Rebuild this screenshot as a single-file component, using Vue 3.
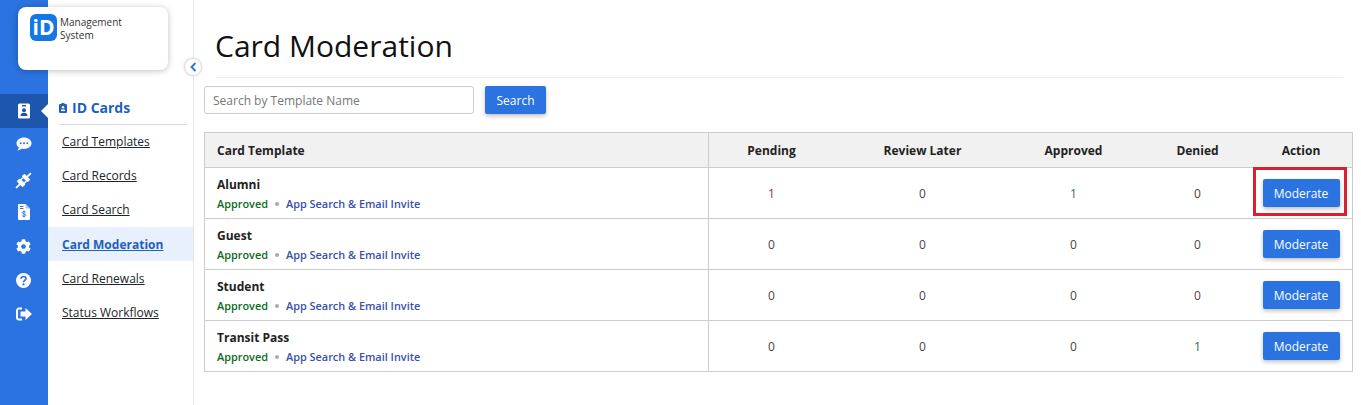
<script setup>
const navIcons = ['chat', 'plug', 'file', 'gear', 'help', 'out']
const links = ['Card Templates', 'Card Records', 'Card Search', 'Card Moderation', 'Card Renewals', 'Status Workflows']
const rows = [
  { name: 'Alumni', vals: ['1', '0', '1', '0'], flagged: true },
  { name: 'Guest', vals: ['0', '0', '0', '0'] },
  { name: 'Student', vals: ['0', '0', '0', '0'] },
  { name: 'Transit Pass', vals: ['0', '0', '0', '1'] },
]
const tones = ['pending', 'later', 'approved', 'denied']
</script>

<template>
  <div class="page">
    <aside class="rail">
      <div class="rail-item active">
        <svg width="14" height="16" viewBox="0 0 14 16"><rect x="1" y="0.5" width="12" height="15" rx="1.5" fill="#fff"/><rect x="5" y="2" width="4" height="1.4" fill="#1c56ad"/><circle cx="7" cy="7.2" r="2" fill="#1c56ad"/><path d="M3.5 13c0-2.3 1.5-3.2 3.5-3.2s3.500.9 3.500 3.200z" fill="#1c56ad"/></svg>
        <span class="notch"></span>
      </div>
      <div v-for="i in navIcons" :key="i" class="rail-item">
        <svg v-if="i === 'chat'" width="16" height="14" viewBox="0 0 16 14"><path d="M8 .5c4.200 0 7.500 2.500 7.500 5.700S12.200 11.900 8 11.900c-.8 0-1.500-.1-2.200-.3C4.700 12.600 3 13.500 1.200 13.500c1-.9 1.600-2 1.800-3C1.400 9.500.5 7.900.5 6.200.5 3 3.800.5 8 .5z" fill="#fff"/><g fill="#2a73e0"><circle cx="4.700" cy="6.200" r="1"/><circle cx="8" cy="6.200" r="1"/><circle cx="11.300" cy="6.200" r="1"/></g></svg>
        <svg v-else-if="i === 'plug'" class="plug" width="17" height="17" viewBox="0 0 17 17"><g transform="rotate(-45 8.500 8.500)" fill="#fff"><rect x="-2" y="7.600" width="5.500" height="1.800"/><rect x="3" y="4.300" width="4.500" height="8.400" rx="1.200"/><rect x="7.500" y="5.400" width="2.600" height="1.500"/><rect x="7.500" y="10.100" width="2.600" height="1.500"/><rect x="10" y="4.300" width="4" height="8.400" rx="1.200"/><rect x="13.500" y="7.600" width="5.500" height="1.800"/></g></svg>
        <svg v-else-if="i === 'file'" width="12" height="16" viewBox="0 0 12 16"><path d="M0 1a1 1 0 0 1 1-1h6.500L12 4.500V15a1 1 0 0 1-1 1H1a1 1 0 0 1-1-1z" fill="#fff"/><path d="M7.500 0v4.500H12z" fill="#a9c7f3"/><path d="M2 2.500h3.500M2 4.500h3.500" stroke="#2a73e0" stroke-width="1"/><path d="M7.700 8.200c-.3-.5-.9-.7-1.700-.7-1 0-1.700.5-1.700 1.200 0 1.700 3.500.8 3.500 2.500 0 .7-.7 1.200-1.800 1.200-.8 0-1.500-.3-1.800-.8M6 6.500v7" fill="none" stroke="#2a73e0" stroke-width=".9"/></svg>
        <svg v-else-if="i === 'gear'" width="15" height="15" viewBox="0 0 512 512"><path fill="#fff" d="M487.400 315.700l-42.600-24.600c4.300-23.200 4.300-47 0-70.200l42.600-24.600c4.900-2.800 7.100-8.600 5.500-14-11.100-35.600-30-67.800-54.700-94.600-3.800-4.100-10-5.100-14.800-2.300L380.800 110c-17.900-15.400-38.500-27.300-60.800-35.100V25.800c0-5.600-3.900-10.500-9.400-11.700-36.700-8.200-74.300-7.800-109.200 0-5.500 1.200-9.400 6.100-9.400 11.700V75c-22.200 7.900-42.800 19.800-60.800 35.100L88.700 85.500c-4.900-2.800-11-1.900-14.800 2.300-24.700 26.700-43.600 58.900-54.700 94.600-1.700 5.400.6 11.200 5.500 14L67.300 221c-4.300 23.200-4.300 47 0 70.200l-42.600 24.600c-4.900 2.800-7.100 8.600-5.500 14 11.100 35.600 30 67.800 54.700 94.600 3.800 4.100 10 5.100 14.800 2.300l42.600-24.600c17.900 15.400 38.500 27.300 60.800 35.100v49.200c0 5.600 3.900 10.500 9.400 11.700 36.700 8.200 74.300 7.800 109.200 0 5.500-1.200 9.400-6.100 9.400-11.700v-49.200c22.200-7.900 42.800-19.800 60.800-35.100l42.600 24.600c4.900 2.800 11 1.900 14.800-2.300 24.700-26.700 43.600-58.900 54.700-94.600 1.500-5.500-.7-11.300-5.600-14.100zM256 336c-44.100 0-80-35.900-80-80s35.900-80 80-80 80 35.900 80 80-35.900 80-80 80z"/></svg>
        <svg v-else-if="i === 'help'" width="15" height="15" viewBox="0 0 15 15"><circle cx="7.500" cy="7.500" r="7.500" fill="#fff"/><path d="M5 5.700c0-1.400 1.100-2.200 2.500-2.200s2.500.8 2.500 2.100c0 1.800-2.500 1.800-2.500 3.600" fill="none" stroke="#2a73e0" stroke-width="1.700"/><circle cx="7.500" cy="11.400" r="1.100" fill="#2a73e0"/></svg>
        <svg v-else width="16" height="14" viewBox="0 0 16 14"><path d="M6 1.500H3A2 2 0 0 0 1 3.500v7a2 2 0 0 0 2 2h3" fill="none" stroke="#fff" stroke-width="2"/><path d="M9.500 1L16 7l-6.500 6V9.500H4.500v-5h5z" fill="#fff"/></svg>
      </div>
    </aside>

    <nav class="panel">
      <h2 class="panel-title">
        <svg width="8" height="10" viewBox="0 0 8 10"><rect y="1" width="8" height="9" rx="1.200" fill="#1f5fbd"/><rect x="2.500" width="3" height="2" fill="#1f5fbd"/><circle cx="4" cy="4.300" r="1.200" fill="#fff"/><rect x="2" y="6.500" width="4" height="1.600" fill="#fff"/></svg>
        ID Cards
      </h2>
      <a v-for="l in links" :key="l" href="#" class="link" :class="{ current: l === 'Card Moderation' }"><span>{{ l }}</span></a>
    </nav>

    <div class="logo-card">
      <span class="logo-mark">iD</span>
      <span class="logo-text">Management<br>System</span>
    </div>
    <button class="collapse" type="button" aria-label="Collapse">
      <svg width="7" height="10" viewBox="0 0 7 10"><path d="M5.500 1L1.500 5l4 4" fill="none" stroke="#2a73e0" stroke-width="1.800"/></svg>
    </button>

    <main class="main">
      <h1 class="title"><span class="title-text">Card Moderation</span></h1>
      <div class="search-row">
        <input class="search" placeholder="Search by Template Name" />
        <button class="btn search-btn" type="button">Search</button>
      </div>
      <div class="table">
        <div class="tr head">
          <div class="c first">Card Template</div>
          <div class="c pending">Pending</div>
          <div class="c later">Review Later</div>
          <div class="c approved">Approved</div>
          <div class="c denied">Denied</div>
          <div class="c action">Action</div>
        </div>
        <div v-for="r in rows" :key="r.name" class="tr row">
          <div class="c first">
            <div class="name">{{ r.name }}</div>
            <div class="meta"><span class="ok">Approved</span><i class="dot"></i><span class="kind">App Search &amp; Email Invite</span></div>
          </div>
          <div v-for="(v, n) in r.vals" :key="n" class="c num" :class="[tones[n], { one: v === '1' }]">{{ v }}</div>
          <div class="c action">
            <button class="btn mod" type="button">Moderate</button>
            <span v-if="r.flagged" class="flag"></span>
          </div>
        </div>
      </div>
    </main>
  </div>
</template>

<style>
html, body { margin: 0; background: #fff; }
</style>

<style scoped>
.page { position: relative; display: flex; width: 1361px; height: 405px; overflow: hidden; background: #fff; font-family: "Open Sans", sans-serif; color: #212529; }
.rail { width: 48px; flex: none; background: #2a73e0; padding-top: 94px; box-sizing: border-box; }
.rail-item { position: relative; height: 34px; display: flex; align-items: center; justify-content: center; padding-right: 1px; box-sizing: border-box; }
.rail-item.active { background: #1c56ad; margin-bottom: -1px; }
.plug { margin-top: 5px; }
.notch { position: absolute; right: 0; top: 50%; margin-top: -7px; border: 7px solid transparent; border-right-color: #fff; border-left-width: 0; }
.panel { width: 146px; flex: none; box-sizing: border-box; height: 405px; border-right: 1px solid #e6e6e6; padding-top: 97px; }
.panel-title { display: flex; align-items: center; gap: 5px; margin: 0 6px 0 11px; padding-bottom: 4.500px; height: 22px; border-bottom: 1px solid #dcdcdc; font-size: 14px; line-height: 22px; font-weight: 700; color: #1f5fbd; }
.link { display: flex; align-items: center; height: 34.2px; padding-left: 14px; font-size: 12px; color: #212529; text-decoration: underline; }
.link.current { background: #e8f0fb; color: #1f5fbd; font-weight: 700; }
.logo-card { position: absolute; left: 18px; top: 7px; width: 150px; height: 63px; background: #fff; border-radius: 8px; box-shadow: 0 1px 6px rgba(0,0,0,.25); display: flex; align-items: flex-start; padding: 7px 0 0 12px; box-sizing: border-box; gap: 3px; }
.logo-mark { width: 27px; height: 27px; border-radius: 6px; background: #1577e6; color: #fff; font-size: 21px; line-height: 27px; font-weight: 700; text-align: center; }
.logo-text { font-size: 10px; line-height: 12.500px; color: #333; padding-top: 2px; }
.collapse { position: absolute; left: 184px; top: 58px; width: 18px; height: 18px; padding: 0; border: 1px solid #ddd; border-radius: 50%; background: #fff; display: flex; align-items: center; justify-content: center; box-shadow: 0 0 3px rgba(0,0,0,.15); }
.main { flex: 1; padding: 0 8px 0 10px; min-width: 0; }
.title { margin: 0 10px 0 12px; height: 78px; box-sizing: border-box; padding-top: 25px; border-bottom: 1px solid #eee; font-size: 30px; line-height: 41px; font-weight: 400; color: #111; }
.title-text { display: block; margin-left: -1px; }
.search-row { display: flex; gap: 11px; margin-top: 8px; }
.search { width: 270px; height: 28px; box-sizing: border-box; border: 1px solid #ccc; border-radius: 3px; padding: 0 8px; font: 12px "Open Sans", sans-serif; outline: none; }
.search::placeholder { color: #777; opacity: 1; }
.btn { border: 0; border-radius: 2px; background: #2a73e0; color: #fff; font: 12px "Open Sans", sans-serif; box-shadow: 0 2px 4px rgba(0,0,0,.25); padding: 0; }
.search-btn { width: 61px; height: 28px; }
.table { margin-top: 18px; border: 1px solid #ccc; border-bottom: 0; }
.tr { display: flex; border-bottom: 1px solid #ccc; }
.head { height: 35px; box-sizing: border-box; background: #f1f1f1; font-size: 12px; font-weight: 700; color: #222; }
.row { height: 51px; box-sizing: border-box; font-size: 12px; }
.c { display: flex; align-items: center; justify-content: center; box-sizing: border-box; }
.first { width: 504px; justify-content: flex-start; padding-left: 12px; border-right: 1px solid #ccc; }
.row .first { flex-direction: column; align-items: flex-start; justify-content: center; padding-top: 2px; }
.pending { width: 125px; }
.later { width: 177px; }
.approved { width: 125px; }
.denied { width: 123px; }
.action { flex: 1; position: relative; padding-right: 9px; }
.name { font-weight: 700; color: #222; line-height: 17px; }
.meta { display: flex; align-items: center; font-size: 10.900px; font-weight: 600; line-height: 17px; margin-top: 2px; }
.ok { color: #0b6b1d; }
.dot { width: 4px; height: 4px; border-radius: 50%; background: #aaa; margin: 0 7px 0 7px; }
.kind { color: #3a4fae; }
.num { color: #444; }
.num.pending.one { color: #a03048; }
.num.approved.one { color: #3d6b4a; }
.num.denied.one { color: #2c6b3a; }
.mod { width: 77px; height: 28px; }
.flag { position: absolute; left: -6px; top: -1px; width: 94px; height: 49px; box-sizing: border-box; border: 3px solid #d9202c; }
</style>
